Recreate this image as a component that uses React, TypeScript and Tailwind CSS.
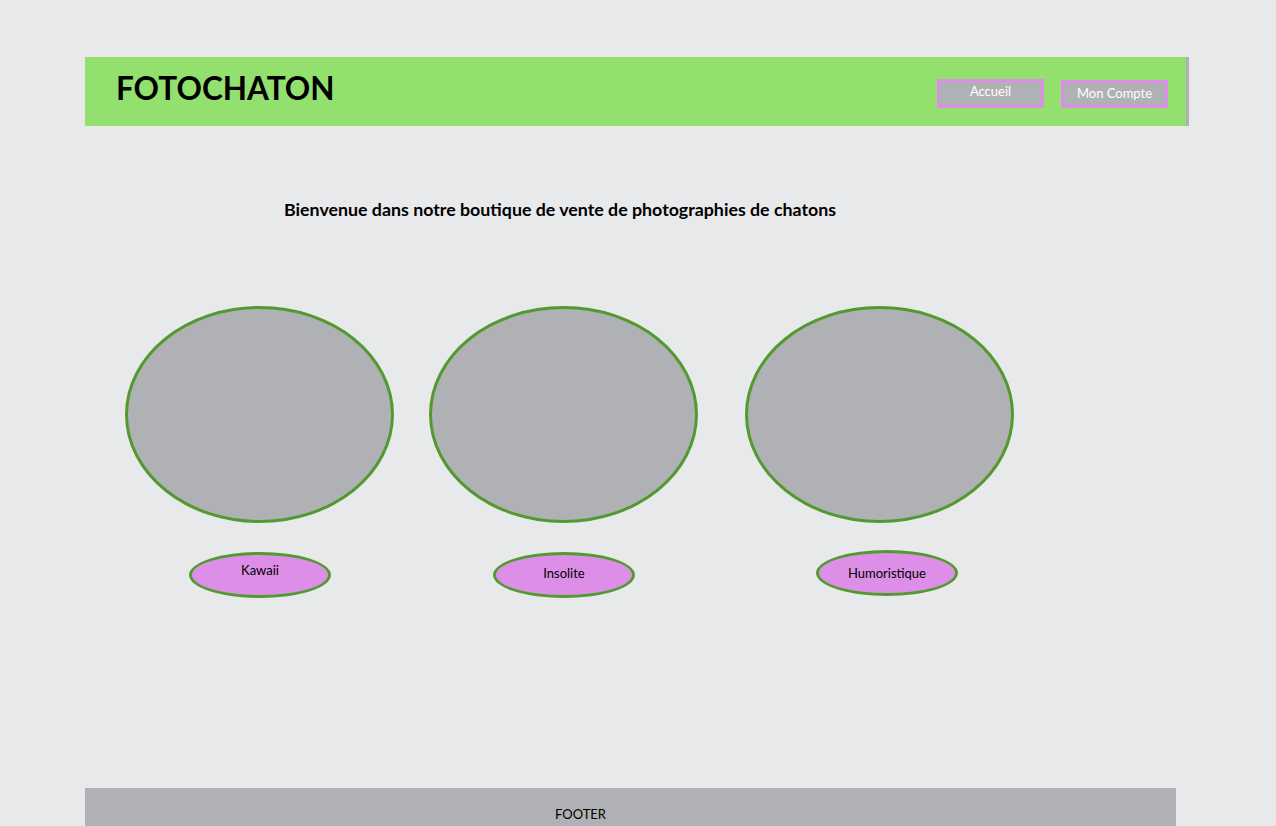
export default function App() {
  const font = { fontFamily: '"Lato", "Noto Sans", sans-serif' };
  const cats = [
    { label: "Kawaii", ml: "ml-[125px]", pillOff: "ml-[64px]", pillMt: "mt-[29px]", textPad: "pt-[9px]" },
    { label: "Insolite", ml: "ml-[35px]", pillOff: "ml-[64px]", pillMt: "mt-[29px]", textPad: "pt-[12px]" },
    { label: "Humoristique", ml: "ml-[47px]", pillOff: "ml-[71px]", pillMt: "mt-[27px]", textPad: "pt-[14px]" },
  ];
  return (
    <div className="min-h-screen h-[826px] overflow-hidden bg-[#e8e9eb] flex flex-col" style={font}>
      <header className="mt-[57px] ml-[85px] w-[1104px] h-[69px] bg-[#93e06f] flex items-start">
        <h1 className="ml-[31px] mt-[16px] text-[31.5px] font-bold text-black leading-none">FOTOCHATON</h1>
        <nav className="ml-auto mr-[18px] mt-[22px] flex items-start gap-[17px]">
          <a className="box-border w-[107px] h-[29px] [border:3px_solid_#dd8fe8] bg-[#b0b1b4] text-white text-[13px] leading-none flex justify-center pt-[3px]">Accueil</a>
          <a className="box-border w-[107px] h-[28px] mt-[1px] [border:3px_solid_#dd8fe8] bg-[#b0b1b4] text-white text-[13px] leading-none flex justify-center pt-[4px]">Mon Compte</a>
        </nav>
        <div className="w-[3px] h-full bg-[#b0b1b4]" />
      </header>
      <main className="flex flex-col">
        <h2 className="mt-[72px] ml-[284px] text-[17.8px] font-bold text-black leading-[22px]">
          Bienvenue dans notre boutique de vente de photographies de chatons
        </h2>
        <div className="mt-[86px] flex">
          {cats.map((c) => (
            <div key={c.label} className={`${c.ml} flex flex-col`}>
              <div className="w-[269px] h-[217px] rounded-[50%] bg-[#b0b1b4] border-[3px] border-solid border-[#529a2f]" />
              <div className={`${c.pillMt} ${c.pillOff} w-[142px] h-[46px] rounded-[50%] bg-[#dd8fe8] border-[3px] border-solid border-[#529a2f] text-center text-[13px] text-black leading-none ${c.textPad}`}>
                {c.label}
              </div>
            </div>
          ))}
        </div>
      </main>
      <footer className="mt-auto ml-[85px] w-[1091px] h-[38px] bg-[#b0b1b4] pt-[13px]">
        <span className="ml-[470px] text-[13px] text-black leading-none">FOOTER</span>
      </footer>
    </div>
  );
}
